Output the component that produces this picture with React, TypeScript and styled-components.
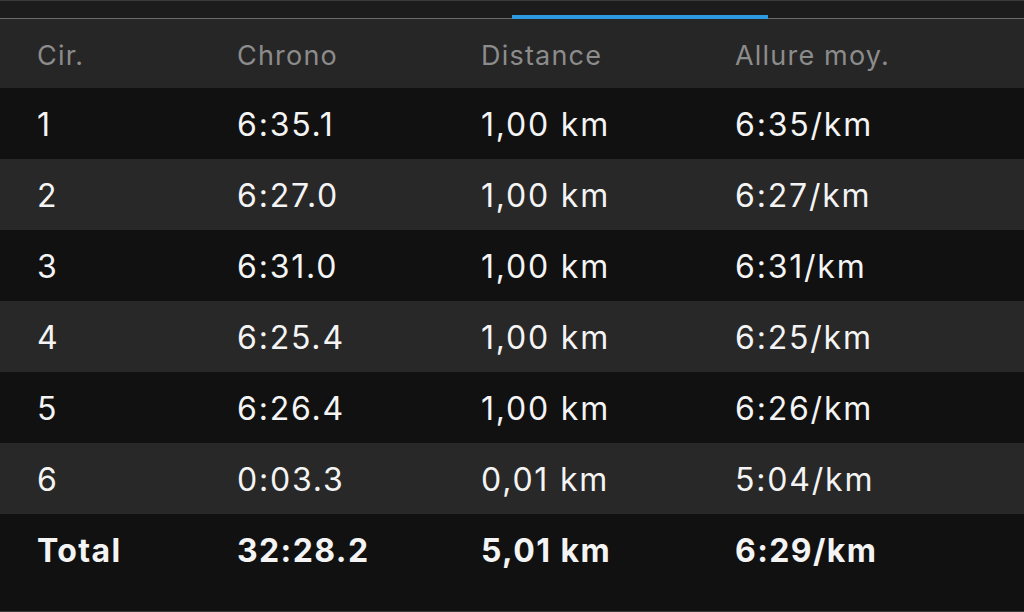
import * as React from 'react';
import styled, { createGlobalStyle } from 'styled-components';

const GlobalStyle = createGlobalStyle`
  html, body {
    margin: 0;
    padding: 0;
    background: #111111;
  }
  body {
    font-family: Inter, Roboto, "Liberation Sans", sans-serif;
  }
`;

interface Lap {
  lap: string;
  chrono: string;
  distance: string;
  pace: string;
}

const laps: Lap[] = [
  { lap: '1', chrono: '6:35.1', distance: '1,00 km', pace: '6:35/km' },
  { lap: '2', chrono: '6:27.0', distance: '1,00 km', pace: '6:27/km' },
  { lap: '3', chrono: '6:31.0', distance: '1,00 km', pace: '6:31/km' },
  { lap: '4', chrono: '6:25.4', distance: '1,00 km', pace: '6:25/km' },
  { lap: '5', chrono: '6:26.4', distance: '1,00 km', pace: '6:26/km' },
  { lap: '6', chrono: '0:03.3', distance: '0,01 km', pace: '5:04/km' },
];

const Screen = styled.div`
  width: 1024px;
  height: 612px;
  display: flex;
  flex-direction: column;
  background: #111111;
  overflow: hidden;
  border-bottom: 1px solid #3a3a3a;
  box-sizing: border-box;
`;

const TabBar = styled.div`
  height: 19px;
  flex-shrink: 0;
  background: #1c1c1c;
  border-top: 1px solid #3c3c3c;
  border-bottom: 1px solid #6a6a6a;
  box-sizing: border-box;
  display: flex;
  align-items: flex-end;
`;

const TabSlot = styled.div<{ active?: boolean }>`
  flex: 1;
  height: 4px;
  margin-bottom: -1px;
  background: ${(p) => (p.active ? '#2e9be0' : 'transparent')};
`;

const Row = styled.div<{ tone: 'header' | 'dark' | 'light'; tall?: boolean }>`
  display: grid;
  grid-template-columns: 200px 244px 254px 1fr;
  align-items: ${(p) => (p.tall ? 'start' : 'center')};
  height: ${(p) => (p.tone === 'header' ? '69px' : p.tall ? '98px' : '71px')};
  padding: ${(p) =>
    p.tall ? '19px 0 0 37px' : p.tone === 'header' ? '3px 0 0 37px' : '2px 0 0 37px'};
  box-sizing: border-box;
  flex-shrink: 0;
  background: ${(p) =>
    p.tone === 'header' ? '#262626' : p.tone === 'light' ? '#282828' : '#111111'};
`;

const HeadCell = styled.div`
  color: #8c8c8c;
  font-size: 27px;
  letter-spacing: 1.2px;
`;

const Cell = styled.div<{ bold?: boolean }>`
  color: #f4f4f4;
  font-size: 32px;
  font-weight: ${(p) => (p.bold ? 700 : 400)};
  letter-spacing: ${(p) => (p.bold ? '1.4px' : '1.8px')};
  line-height: 36px;
`;

export default function App() {
  return (
    <>
      <GlobalStyle />
      <Screen>
        <TabBar>
          <TabSlot />
          <TabSlot />
          <TabSlot active />
          <TabSlot />
        </TabBar>
        <Row tone="header">
          <HeadCell>Cir.</HeadCell>
          <HeadCell>Chrono</HeadCell>
          <HeadCell>Distance</HeadCell>
          <HeadCell>Allure moy.</HeadCell>
        </Row>
        {laps.map((l, i) => (
          <Row key={l.lap} tone={i % 2 === 0 ? 'dark' : 'light'}>
            <Cell>{l.lap}</Cell>
            <Cell>{l.chrono}</Cell>
            <Cell>{l.distance}</Cell>
            <Cell>{l.pace}</Cell>
          </Row>
        ))}
        <Row tone="dark" tall>
          <Cell bold>Total</Cell>
          <Cell bold>32:28.2</Cell>
          <Cell bold>5,01 km</Cell>
          <Cell bold>6:29/km</Cell>
        </Row>
      </Screen>
    </>
  );
}
